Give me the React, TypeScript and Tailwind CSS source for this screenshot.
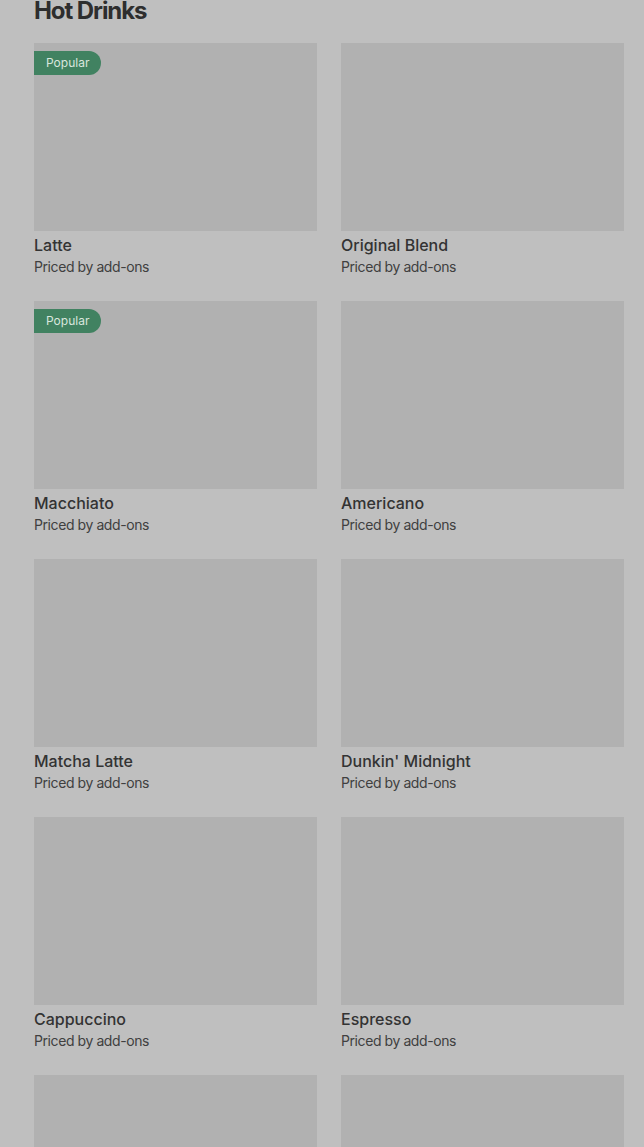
const items = [
  { name: 'Latte', popular: true },
  { name: 'Original Blend', popular: false },
  { name: 'Macchiato', popular: true },
  { name: 'Americano', popular: false },
  { name: 'Matcha Latte', popular: false },
  { name: "Dunkin' Midnight", popular: false },
  { name: 'Cappuccino', popular: false },
  { name: 'Espresso', popular: false },
  { name: 'Hot Chocolate', popular: false },
  { name: 'Chai Latte', popular: false },
];

const Card = ({ name, popular }: { name: string; popular: boolean }) => {
  return (
    <div className="flex flex-col">
      <div className="relative h-[188px] bg-[#b1b1b1]">
        {popular && (
          <span className="absolute left-0 top-2 flex h-6 items-center rounded-r-full bg-[#418261] px-3 text-xs text-[#d9e6de]">
            Popular
          </span>
        )}
      </div>
      <div className="mt-[2px] text-base font-medium leading-6 text-[#333333]">{name}</div>
      <div className="text-sm leading-5 tracking-[-0.03em] text-[#404040]">Priced by add-ons</div>
    </div>
  );
};

const App = (): JSX.Element => {
  return (
    <div
      className="h-[1147px] overflow-hidden bg-[#bfbfbf] pl-[34px] pr-5"
      style={{ fontFamily: 'Inter, "Liberation Sans", sans-serif' }}
    >
      <h2 className="-mt-[5px] text-2xl font-bold leading-8 tracking-[-0.045em] text-[#2e2e2e]">
        Hot Drinks
      </h2>
      <div className="mt-4 grid grid-cols-2 gap-x-6 gap-y-6">
        {items.map((item) => (
          <Card key={item.name} name={item.name} popular={item.popular} />
        ))}
      </div>
    </div>
  );
};

export default App;
